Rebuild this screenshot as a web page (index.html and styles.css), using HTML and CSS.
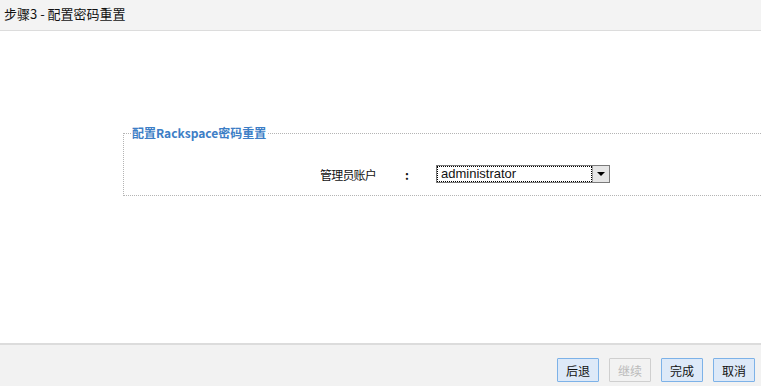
FILE: index.html
```html
<!DOCTYPE html>
<html lang="zh-CN">
<head>
  <meta charset="UTF-8" />
  <title>步骤3 - 配置密码重置</title>
  <link rel="stylesheet" href="styles.css">
</head>
<body>
  <header class="title-bar">
    <h1 class="title">步骤3 - 配置密码重置</h1>
  </header>

  <main class="content">
    <fieldset class="group">
      <legend>配置Rackspace密码重置</legend>
      <div class="form-row">
        <label class="field-label">管理员账户</label>
        <span class="colon">:</span>
        <div class="combo">
          <span class="combo-value">administrator</span>
          <span class="combo-btn"><span class="arrow"></span></span>
        </div>
      </div>
    </fieldset>
  </main>

  <footer class="button-bar">
    <button class="btn">后退</button>
    <button class="btn" disabled>继续</button>
    <button class="btn">完成</button>
    <button class="btn">取消</button>
  </footer>
</body>
</html>
```

FILE: styles.css
```css
body {
  margin: 0;
  padding: 0;
  width: 761px;
  height: 386px;
  overflow: hidden;
  background: #fff;
  font-family: "Noto Sans CJK SC", "DejaVu Sans", sans-serif;
  font-size: 12px;
  color: #111;
  display: flex;
  flex-direction: column;
}

.title-bar {
  height: 30px;
  background: #f3f3f3;
  border-bottom: 1px solid #dcdcdc;
  display: flex;
  align-items: center;
  padding-left: 4px;
}

.title {
  margin: 0;
  margin-top: -4px;
  font-size: 13px;
  font-weight: normal;
  color: #111;
}

.content {
  height: 312px;
  overflow: hidden;
}

.group {
  margin: 95px 0 0 123px;
  padding: 0;
  width: 700px;
  height: 68px;
  border: 1px dotted #b4b4b4;
}

.group legend {
  margin-left: 7px;
  padding: 0 2px 0 1px;
  font-size: 12px;
  font-weight: bold;
  color: #3d7ec6;
  line-height: 14px;
}

.form-row {
  display: flex;
  align-items: center;
  margin-top: 25px;
}

.field-label {
  margin-left: 196px;
  width: 85px;
  letter-spacing: -0.8px;
}

.colon {
  width: 31px;
  font-weight: bold;
}

.combo {
  display: flex;
  width: 174px;
  height: 18px;
  box-sizing: border-box;
  border: 1px solid #7a7a7a;
}

.combo-value {
  flex: 1;
  border: 1px dotted #000;
  line-height: 14px;
  padding-left: 3px;
  font-family: "Liberation Sans", sans-serif;
  font-size: 13px;
}

.combo-btn {
  width: 16px;
  background: #e6e6e6;
  border-left: 1px solid #a0a0a0;
  display: flex;
  align-items: center;
  justify-content: center;
}

.arrow {
  width: 0;
  height: 0;
  border-left: 4px solid transparent;
  border-right: 4px solid transparent;
  border-top: 4px solid #000;
}

.button-bar {
  flex: 1;
  background: #f2f2f2;
  border-top: 2px solid #dcdcdc;
  display: flex;
  justify-content: flex-end;
  align-items: flex-start;
  gap: 10px;
  padding: 13px 6px 0 0;
}

.btn {
  width: 42px;
  height: 24px;
  padding: 0;
  background: #dde9f8;
  border: 1px solid #7db2e8;
  border-radius: 1px;
  font-family: "Noto Sans CJK SC", sans-serif;
  font-size: 12px;
  color: #111;
}

.btn:disabled {
  background: #f2f2f2;
  border-color: #cfcfcf;
  color: #bbb;
}
```
